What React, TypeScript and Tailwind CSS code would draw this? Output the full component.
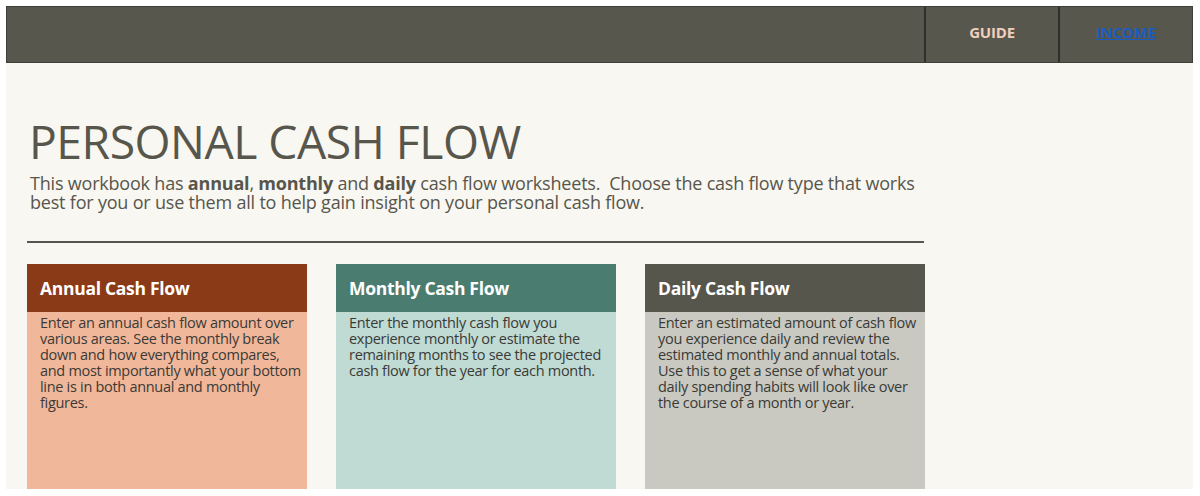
import React from "react";

const font = { fontFamily: '"Open Sans", "Noto Sans", sans-serif' };

function Card({ title, head, body, lines }: { title: string; head: string; body: string; lines: string[] }) {
  return (
    <div className={`flex flex-col w-[280px] ${body}`}>
      <div className={`h-[48px] flex items-center pl-[13px] ${head}`}>
        <span className="text-white font-bold text-[17.5px] tracking-[-0.3px]">{title}</span>
      </div>
      <div className="pl-[13px] pt-[3px] text-[14.5px] leading-[16px] text-[#3a3a36] tracking-[-0.3px]">
        {lines.map((l, i) => (
          <div key={i} className="whitespace-nowrap">{l}</div>
        ))}
      </div>
    </div>
  );
}

export default function App() {
  return (
    <div className="w-[1200px] h-[496px] bg-white pt-[6px] px-[6px]" style={font}>
      <div className="w-[1187px] h-[57px] bg-[#58574d] border border-[#3f3e37] flex justify-end">
        <div className="w-[134px] h-full border-l-2 border-[#2f2e29] flex items-center justify-center pb-[4px]">
          <span className="text-[#f0cfbd] font-bold text-[15px] tracking-[-0.2px]">GUIDE</span>
        </div>
        <div className="w-[134px] h-full border-l-2 border-[#2f2e29] flex items-center justify-center pb-[4px]">
          <span className="text-[#1b5cc0] font-bold text-[15px] underline tracking-[-0.2px]">INCOME</span>
        </div>
      </div>
      <div className="w-[1187px] h-[426px] bg-[#f9f7f1] pl-[21px]">
        <h1 className="pt-[51px] text-[46.3px] leading-[56px] text-[#57564c] tracking-[-0.5px] pl-[2px]">PERSONAL CASH FLOW</h1>
        <p className="mt-[4px] text-[18px] leading-[19px] text-[#57564c] tracking-[-0.2px] pl-[3px] w-[900px]">
          This workbook has <b>annual</b>, <b>monthly</b> and <b>daily</b> cash flow worksheets.&nbsp; Choose the cash flow type that works best for you or use them all to help gain insight on your personal cash flow.
        </p>
        <div className="mt-[29px] w-[897px] h-[2px] bg-[#57564c]" />
        <div className="mt-[21px] flex gap-[29px] h-[225px]">
          <Card
            title="Annual Cash Flow"
            head="bg-[#8b3a17]"
            body="bg-[#f1b79a]"
            lines={[
              "Enter an annual cash flow amount over",
              "various areas. See the monthly break",
              "down and how everything compares,",
              "and most importantly what your bottom",
              "line is in both annual and monthly",
              "figures.",
            ]}
          />
          <Card
            title="Monthly Cash Flow"
            head="bg-[#4a7d6f]"
            body="bg-[#c0dbd4]"
            lines={[
              "Enter the monthly cash flow you",
              "experience monthly or estimate the",
              "remaining months to see the projected",
              "cash flow for the year for each month.",
            ]}
          />
          <Card
            title="Daily Cash Flow"
            head="bg-[#57564c]"
            body="bg-[#c9c9c1]"
            lines={[
              "Enter an estimated amount of cash flow",
              "you experience daily and review the",
              "estimated monthly and annual totals.",
              "Use this to get a sense of what your",
              "daily spending habits will look like over",
              "the course of a month or year.",
            ]}
          />
        </div>
      </div>
    </div>
  );
}
